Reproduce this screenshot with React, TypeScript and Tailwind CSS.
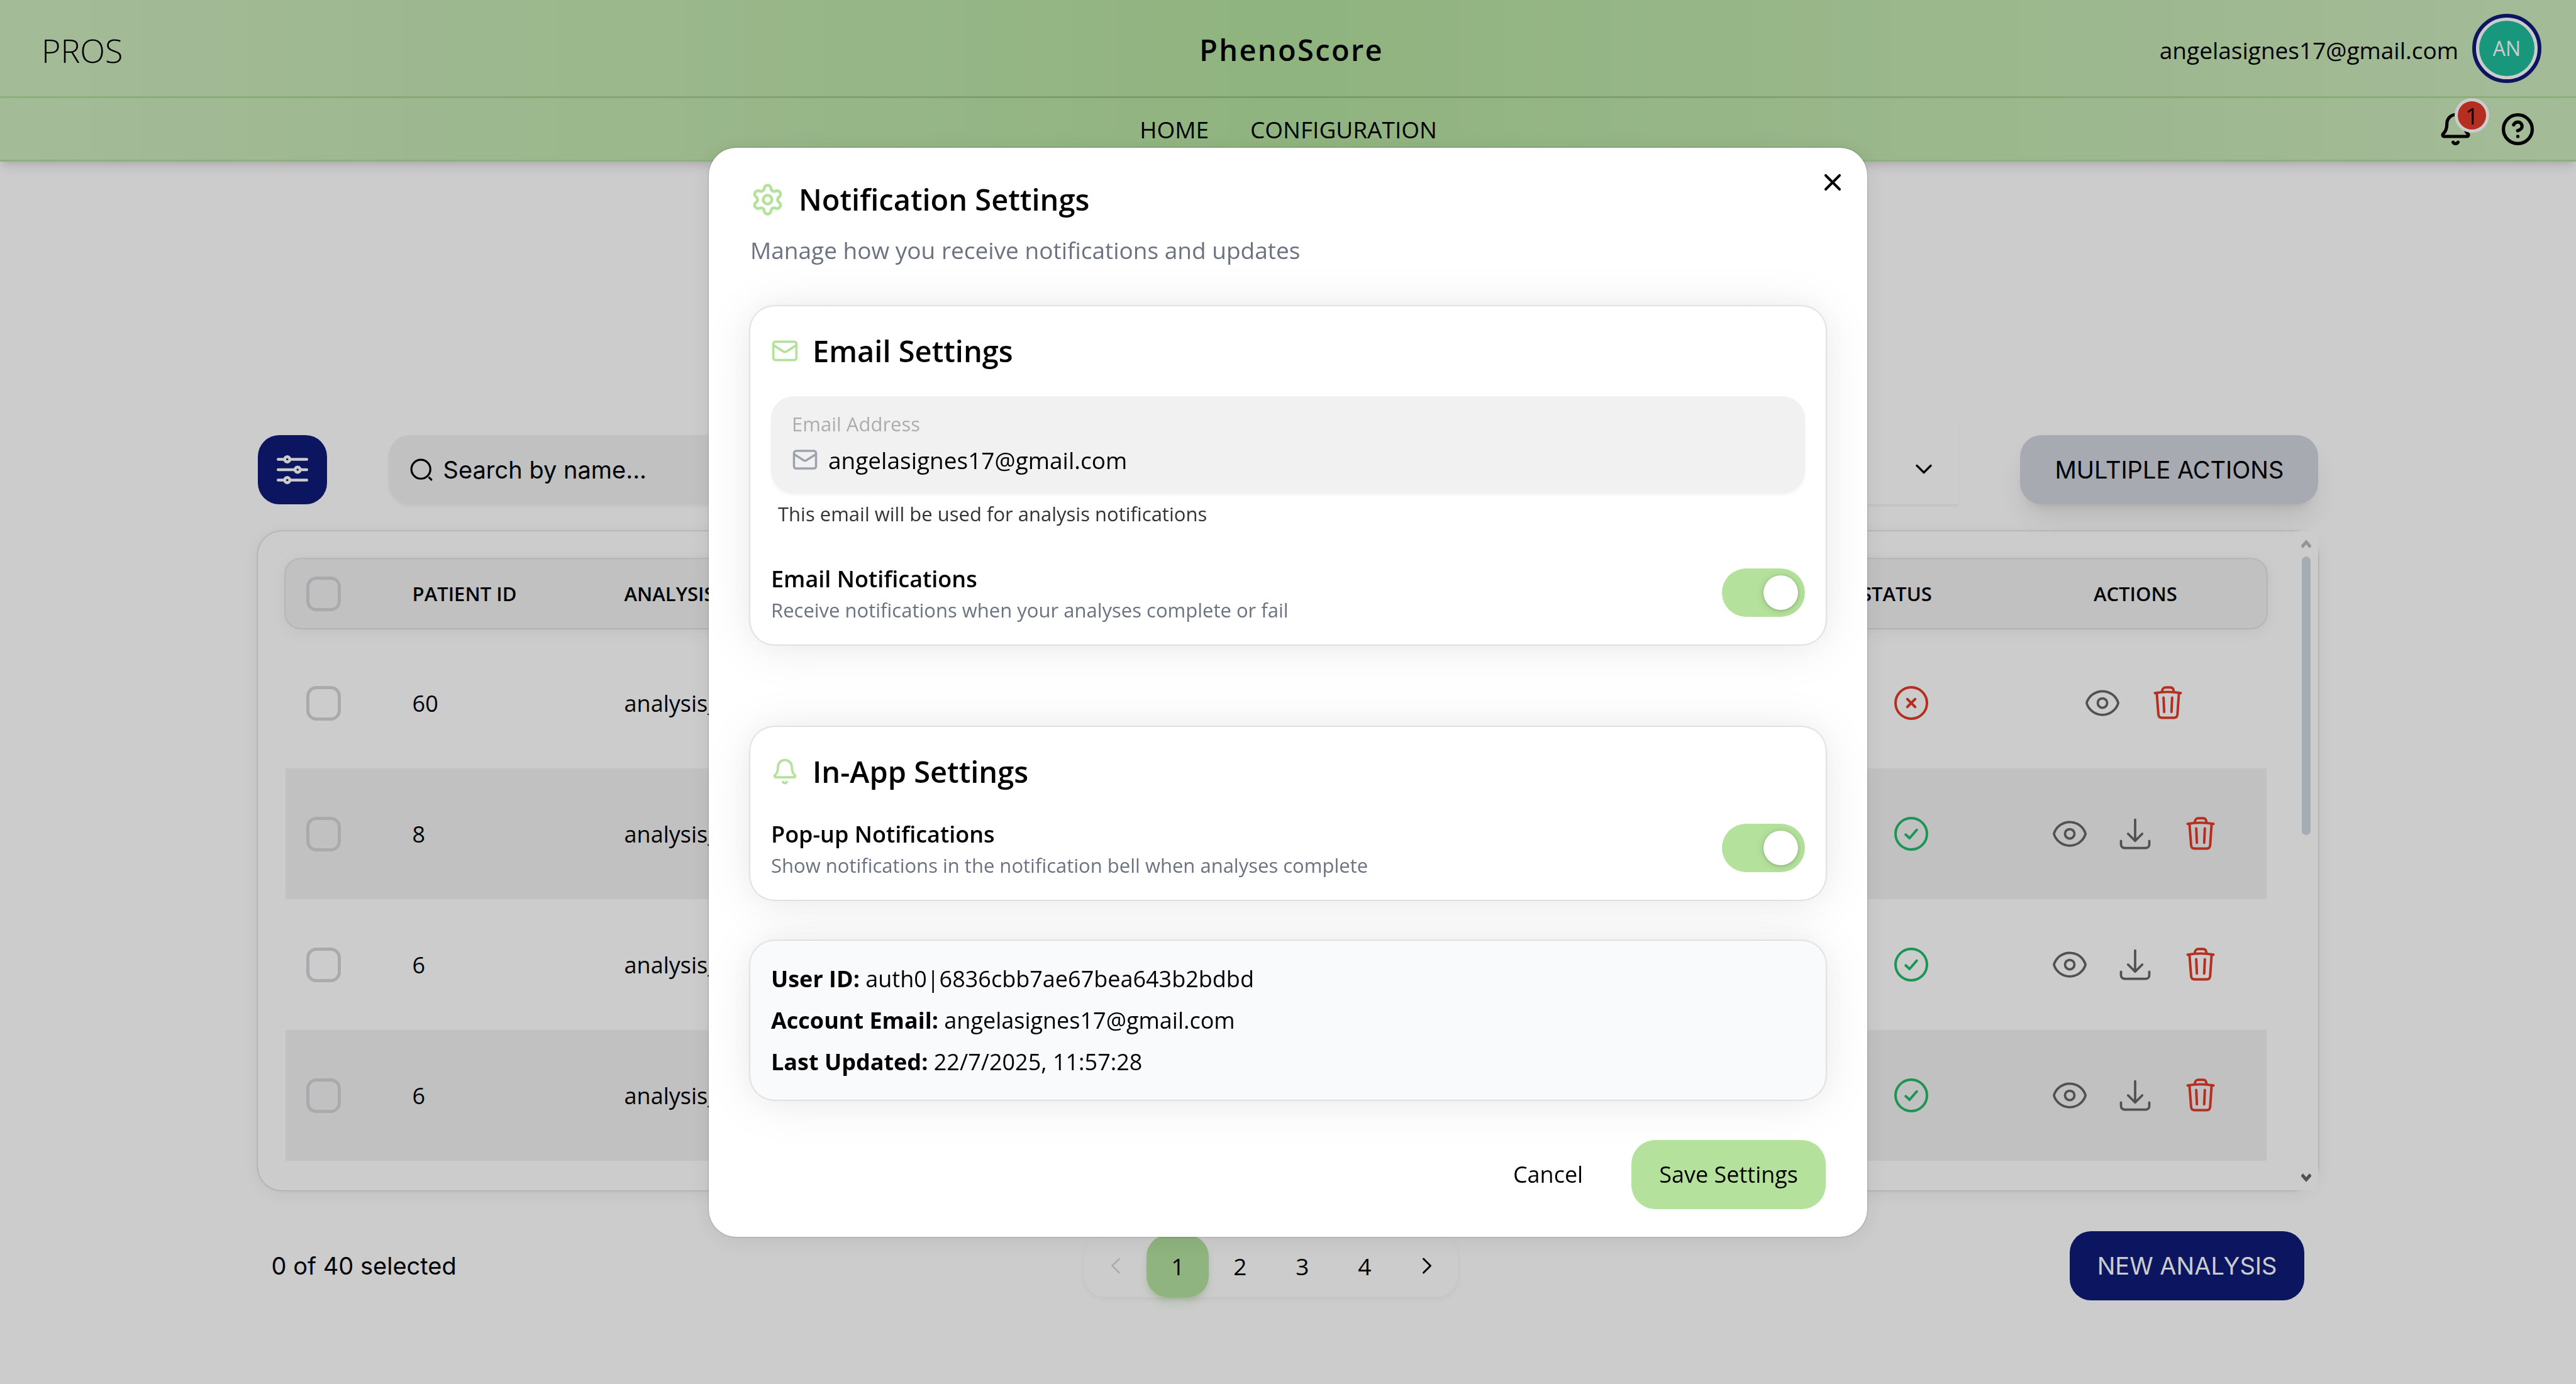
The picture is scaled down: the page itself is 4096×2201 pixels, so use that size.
import type { ReactNode } from "react";
import { Bell, CircleHelp, Mail, Settings } from "lucide-react";

type Row = { id: string; name: string; ok: boolean };

const rows: Row[] = [
  { id: "60", name: "analysis_", ok: false },
  { id: "8", name: "analysis_", ok: true },
  { id: "6", name: "analysis_", ok: true },
  { id: "6", name: "analysis_", ok: true },
];

function Outline({ size, width = 1.5, children }: { size: string; width?: number; children: ReactNode }) {
  return (
    <svg
      viewBox="0 0 24 24"
      className={`shrink-0 ${size}`}
      fill="none"
      stroke="currentColor"
      strokeWidth={width}
      strokeLinecap="round"
      strokeLinejoin="round"
      aria-hidden="true"
    >
      {children}
    </svg>
  );
}

function EyeIcon() {
  return (
    <Outline size="size-[60px]">
      <path d="M2.036 12.322a1.012 1.012 0 0 1 0-.639C3.423 7.51 7.36 4.5 12 4.5c4.638 0 8.573 3.007 9.963 7.178.07.207.07.431 0 .639C20.577 16.49 16.64 19.5 12 19.5c-4.638 0-8.573-3.007-9.963-7.178Z" />
      <path d="M15 12a3 3 0 1 1-6 0 3 3 0 0 1 6 0Z" />
    </Outline>
  );
}

function DownloadIcon() {
  return (
    <Outline size="size-[60px]">
      <path d="M3 16.5v2.25A2.25 2.25 0 0 0 5.25 21h13.5A2.25 2.25 0 0 0 21 18.75V16.5M16.5 12 12 16.5m0 0L7.5 12m4.5 4.5V3" />
    </Outline>
  );
}

function TrashIcon() {
  return (
    <svg
      viewBox="0 0 228 228"
      className="size-[60px] shrink-0"
      fill="none"
      stroke="currentColor"
      strokeWidth="15"
      strokeLinecap="round"
      strokeLinejoin="round"
      aria-hidden="true"
    >
      <path d="M36 54Q114 40 192 54" />
      <path d="M79 46C80 30 88 20 99 20H130C142 20 149 30 150 46" />
      <path d="M47 54L57 184C58 196 66 203 78 203H151C163 203 171 196 172 184L181 54" />
      <path d="M88 82L92 168M140 82L136 168" />
    </svg>
  );
}

function StatusIcon({ ok }: { ok: boolean }) {
  return ok ? (
    <span role="img" aria-label="Completed" className="text-[#21bb69]">
      <Outline size="size-[60px]" width={1.6}>
        <circle cx="12" cy="12" r="10" />
        <path d="M8.5 12.5L10.9 14.8L15.5 9.5" />
      </Outline>
    </span>
  ) : (
    <span role="img" aria-label="Failed" className="text-[#e33b2a]">
      <Outline size="size-[60px]" width={1.6}>
        <circle cx="12" cy="12" r="10" />
        <path d="M14.5 9.5L9.5 14.5M9.5 9.5L14.5 14.5" />
      </Outline>
    </span>
  );
}

function Tick({ label }: { label: string }) {
  return (
    <input
      type="checkbox"
      aria-label={label}
      className="block size-[55px] appearance-none rounded-2xl border-[5px] border-[#d4d5d8] checked:bg-[#101b78]"
    />
  );
}

function Header() {
  return (
    <header className="relative bg-linear-to-r from-[#cdeabe] via-[#b4e19f] to-[#cdeabe] shadow-[0_11px_16px_-3px_#0000001a,0_5px_11px_-5px_#0000001a]">
      <div className="grid h-[153px] grid-cols-[1fr_auto_1fr] items-center pr-[55px] pl-[66px]">
        <span className="pt-1.5 text-[52px] leading-none font-light">PROS</span>
        <h1 className="pt-1.5 text-[47px] leading-none font-semibold tracking-wider">PhenoScore</h1>
        <div className="flex items-center justify-end gap-[22px]">
          <span className="pt-1.5 text-[37px] leading-[55px]">angelasignes17@gmail.com</span>
          <button
            type="button"
            aria-label="Account"
            className="flex size-[110px] items-center justify-center rounded-full border-[6px] border-[#101b78] bg-white p-[5px]"
          >
            <span className="flex size-full items-center justify-center rounded-full bg-[#1fbd9c] text-[32px] leading-none text-white">
              AN
            </span>
          </button>
        </div>
      </div>
      <div className="h-[3px] bg-linear-to-r from-[#b0de9c] via-[#9abf86] to-[#b0de9c]" />
      <div className="grid h-[101px] grid-cols-[1fr_auto_1fr] items-center border-b-[3px] border-[#b1de9b] pr-[65px] pl-[66px]">
        <span />
        <nav className="flex gap-[66px] text-[37px] leading-[55px]">
          <a href="#home">HOME</a>
          <a href="#configuration">CONFIGURATION</a>
        </nav>
        <div className="flex items-center justify-end gap-[44px]">
          <button type="button" aria-label="Notifications" className="relative">
            <Bell className="size-[55px]" strokeWidth={2.2} />
            <span className="absolute -top-[22px] -right-[26px] flex size-[55px] items-center justify-center rounded-full border-[5px] border-white bg-[#e33b2a] text-[37px] leading-none">
              1
            </span>
          </button>
          <button type="button" aria-label="Help">
            <CircleHelp className="size-[55px]" strokeWidth={2.3} />
          </button>
        </div>
      </div>
    </header>
  );
}

function Toolbar() {
  return (
    <div className="flex items-end gap-[98px]">
      <button
        type="button"
        aria-label="Filters"
        className="flex size-[110px] items-center justify-center rounded-[34px] bg-[#101b78] text-white"
      >
        <Outline size="size-[66px]" width={1.7}>
          <path d="M10.5 6h9.75M10.5 6a1.5 1.5 0 1 1-3 0m3 0a1.5 1.5 0 1 0-3 0M3.75 6H7.5m3 12h9.75m-9.75 0a1.5 1.5 0 0 1-3 0m3 0a1.5 1.5 0 0 0-3 0m-3.75 0H7.5m9-6h3.75m-3.75 0a1.5 1.5 0 0 1-3 0m3 0a1.5 1.5 0 0 0-3 0m-9.75 0h9.75" />
        </Outline>
      </button>
      <label className="flex h-[110px] flex-1 items-center gap-[16px] rounded-[34px] bg-[#f2f2f2] px-[33px] shadow-[0_3px_5px_#0000000d]">
        <Outline size="size-[38px]" width={2}>
          <path d="M11.5 21C16.7467 21 21 16.7467 21 11.5C21 6.25329 16.7467 2 11.5 2C6.25329 2 2 6.25329 2 11.5C2 16.7467 6.25329 21 11.5 21Z" />
          <path d="M22 22L20 20" />
        </Outline>
        <input
          type="search"
          aria-label="Search by name"
          placeholder="Search by name..."
          className="w-full bg-transparent font-[Inter,sans-serif] text-[38px] leading-[55px] outline-none placeholder:text-black placeholder:opacity-100"
        />
      </label>
      <div className="relative">
        <select
          aria-label="Filter by status"
          className="block h-[129px] w-[640px] appearance-none bg-white pr-[66px] shadow-[0_3px_3px_#0000000d]"
        >
          <option value="" />
        </select>
        <span className="pointer-events-none absolute right-[33px] bottom-[34px]">
          <Outline size="size-[44px]" width={1.8}>
            <path d="m6 9 6 6 6-6" />
          </Outline>
        </span>
      </div>
      <button
        type="button"
        className="h-[110px] rounded-[34px] bg-[#d1d5de] px-[55px] font-[Inter,sans-serif] text-[38px] leading-[55px] shadow-[0_27px_41px_-8px_#0000001a,0_11px_16px_-11px_#0000001a]"
      >
        MULTIPLE ACTIONS
      </button>
    </div>
  );
}

const cardShadow = "shadow-[0_0_14px_#00000005,0_5px_27px_#0000000f,0_0_3px_#0000004d]";

function AnalysisTable() {
  return (
    <section className={`flex rounded-[38px] bg-white ${cardShadow}`}>
      <div className="flex-1 p-[44px] pb-[47px]">
        <table className="w-full table-fixed border-separate border-spacing-0 text-left">
          <colgroup>
            <col className="w-[169px]" />
            <col className="w-[337px]" />
            <col />
            <col className="w-[294px]" />
            <col className="w-[418px]" />
          </colgroup>
          <thead className="text-[31px] leading-[44px]">
            <tr className={`rounded-[24px] bg-[#f2f2f2] ${cardShadow}`}>
              <th className="h-[110px] rounded-l-[24px] pl-[33px]">
                <Tick label="Select all" />
              </th>
              <th className="pl-[33px] font-semibold">PATIENT ID</th>
              <th className="pl-[33px] font-semibold">ANALYSIS</th>
              <th className="pr-[48px] text-center font-semibold">STATUS</th>
              <th className="rounded-r-[24px] text-center font-semibold">ACTIONS</th>
            </tr>
          </thead>
          <tbody className="text-[36px] leading-[55px] before:block before:h-[15px] before:content-['']">
            {rows.map((row, i) => (
              <tr key={i} className="even:bg-[#f2f2f2]">
                <td className="h-[208px] pl-[33px]">
                  <Tick label={`Select patient ${row.id}, row ${i + 1}`} />
                </td>
                <td className="pl-[33px]">{row.id}</td>
                <td className="pl-[33px]">{row.name}</td>
                <td>
                  <div className="flex justify-center">
                    <StatusIcon ok={row.ok} />
                  </div>
                </td>
                <td>
                  <div className="flex justify-center gap-[44px] text-[#666666]">
                    <button type="button" aria-label="View">
                      <EyeIcon />
                    </button>
                    {row.ok && (
                      <button type="button" aria-label="Download">
                        <DownloadIcon />
                      </button>
                    )}
                    <button type="button" aria-label="Delete" className="text-[#e33b2a]">
                      <TrashIcon />
                    </button>
                  </div>
                </td>
              </tr>
            ))}
          </tbody>
        </table>
      </div>
      <div className="flex w-[38px] flex-col items-center bg-white pt-[13px] pb-[13px]" aria-hidden="true">
        <svg viewBox="0 0 16 14" className="h-[14px] w-[16px] text-[#bbbbbb]" fill="none" stroke="currentColor" strokeWidth="5">
          <path d="M1 12L8 4L15 12" />
        </svg>
        <div className="mt-[13px] h-[443px] w-[14px] rounded-full bg-[#ced8e2]" />
        <svg viewBox="0 0 16 14" className="mt-auto h-[14px] w-[16px] text-[#646464]" fill="none" stroke="currentColor" strokeWidth="5">
          <path d="M1 2L8 10L15 2" />
        </svg>
      </div>
    </section>
  );
}

function PageFooter() {
  return (
    <div className="flex items-center justify-between px-[22px]">
      <p className="pr-[26px] font-[Inter,sans-serif] text-[38px] leading-[55px]">0 of 40 selected</p>
      <nav
        aria-label="Pagination"
        className="flex rounded-[34px] bg-white text-[37px] leading-[55px] shadow-[0_3px_8px_#0000000d]"
      >
        <button type="button" aria-label="Previous page" disabled className="flex size-[99px] items-center justify-center text-black/15">
          <Outline size="size-[38px]" width={1.8}>
            <path d="M15.5 19l-7-7 7-7" />
          </Outline>
        </button>
        <button
          type="button"
          aria-current="page"
          className="size-[99px] rounded-[34px] bg-[#b3e19f] shadow-[0_11px_16px_-3px_#b3e19f66,0_5px_11px_-5px_#00000033]"
        >
          1
        </button>
        {["2", "3", "4"].map((n) => (
          <button key={n} type="button" className="size-[99px]">
            {n}
          </button>
        ))}
        <button type="button" aria-label="Next page" className="flex size-[99px] items-center justify-center">
          <Outline size="size-[38px]" width={1.8}>
            <path d="M8.5 5l7 7-7 7" />
          </Outline>
        </button>
      </nav>
      <button
        type="button"
        className="h-[110px] rounded-[34px] bg-[#101b78] px-[44px] font-[Inter,sans-serif] text-[38px] leading-[55px] text-white"
      >
        NEW ANALYSIS
      </button>
    </div>
  );
}

const panel =
  "rounded-[38px] p-[33px] shadow-[0_0_41px_#00000008,0_5px_82px_#00000014,0_0_3px_#0000004d]";

function ToggleRow({ id, title, text }: { id: string; title: string; text: string }) {
  return (
    <div className="flex items-center justify-between">
      <div>
        <label htmlFor={id} className="block text-[36px] leading-[55px] font-semibold">
          {title}
        </label>
        <p id={`${id}-text`} className="text-[31px] leading-[44px] text-[#6b7280]">
          {text}
        </p>
      </div>
      <input
        id={id}
        type="checkbox"
        role="switch"
        defaultChecked
        aria-describedby={`${id}-text`}
        className="flex h-[77px] w-[132px] appearance-none items-center rounded-full bg-gray-300 px-[11px] before:block before:size-[55px] before:rounded-full before:bg-white before:shadow-[0_1px_14px_#00000020,0_1px_4px_#00000030] before:content-[''] checked:justify-end checked:bg-[#b4e29c]"
      />
    </div>
  );
}

function SettingsDialog() {
  return (
    <div className="fixed inset-0 z-10 flex items-center justify-center bg-black/20">
      <div
        role="dialog"
        aria-modal="true"
        aria-labelledby="dialog-title"
        className="relative w-[1842px] rounded-[44px] bg-white px-[66px] py-[44px] shadow-[0_0_14px_#00000005,0_5px_41px_#00000014,0_0_3px_#0000004d]"
      >
        <button type="button" aria-label="Close" className="absolute top-[33px] right-[33px]">
          <Outline size="size-[44px]" width={2.2}>
            <path d="M18 6L6 18M6 6l12 12" />
          </Outline>
        </button>
        <div className="flex h-[77px] items-center gap-[22px]">
          <Settings className="size-[55px] text-[#b4e29c]" strokeWidth={2} />
          <h2 id="dialog-title" className="text-[47px] leading-[77px] font-semibold">
            Notification Settings
          </h2>
        </div>
        <p className="mt-[14px] text-[37px] leading-[55px] text-[#6b7280]">
          Manage how you receive notifications and updates
        </p>

        <section className={`mt-[62px] bg-white ${panel}`}>
          <div className="flex h-[77px] items-center gap-[22px]">
            <Mail className="size-[44px] text-[#b4e29c]" strokeWidth={2} />
            <h3 className="text-[47px] leading-[77px] font-semibold">Email Settings</h3>
          </div>
          <div className="mt-[33px] rounded-[36px] bg-[#f1f1f1] px-[33px] pt-[22px] pb-[25px] shadow-[0_3px_5px_#0000000d]">
            <label htmlFor="email" className="block text-[31px] leading-[44px] text-[#adadad]">
              Email Address
            </label>
            <div className="mt-2 flex items-center gap-[16px]">
              <Mail className="size-[42px] shrink-0 text-[#9ca3af]" strokeWidth={2} />
              <input
                id="email"
                type="email"
                defaultValue="angelasignes17@gmail.com"
                className="h-[55px] w-full bg-transparent text-[37px] leading-[55px] outline-none"
              />
            </div>
          </div>
          <p className="mt-[11px] mb-[54px] pl-[11px] text-[31px] leading-[44px] text-[#333333]">
            This email will be used for analysis notifications
          </p>
          <ToggleRow
            id="email-toggle"
            title="Email Notifications"
            text="Receive notifications when your analyses complete or fail"
          />
        </section>

        <section className={`mt-[131px] bg-white ${panel}`}>
          <div className="mb-[33px] flex h-[77px] items-center gap-[22px]">
            <Bell className="size-[44px] text-[#b4e29c]" strokeWidth={2} />
            <h3 className="text-[47px] leading-[77px] font-semibold">In-App Settings</h3>
          </div>
          <ToggleRow
            id="popup-toggle"
            title="Pop-up Notifications"
            text="Show notifications in the notification bell when analyses complete"
          />
        </section>

        <section className={`mt-[65px] flex flex-col gap-[11px] bg-[#f9fafc] text-[36px] leading-[55px] ${panel}`}>
          <p>
            <strong className="font-bold">User ID:</strong> auth0|6836cbb7ae67bea643b2bdbd
          </p>
          <p>
            <strong className="font-bold">Account Email:</strong> angelasignes17@gmail.com
          </p>
          <p>
            <strong className="font-bold">Last Updated:</strong> 22/7/2025, 11:57:28
          </p>
        </section>

        <div className="mt-[64px] flex justify-end gap-[33px] text-[36px] leading-[55px]">
          <button type="button" className="h-[110px] px-[44px]">
            Cancel
          </button>
          <button type="button" className="h-[110px] rounded-[38px] bg-[#b4e29c] px-[44px]">
            Save Settings
          </button>
        </div>
      </div>
    </div>
  );
}

export default function App() {
  return (
    <div className="min-h-screen bg-white font-['Open_Sans','Noto_Sans',sans-serif] text-black">
      <Header />
      <main className="mx-auto w-4/5 pt-[416px]">
        <Toolbar />
        <div className="mt-[43px] mb-[65px]">
          <AnalysisTable />
        </div>
        <PageFooter />
      </main>
      <SettingsDialog />
    </div>
  );
}
